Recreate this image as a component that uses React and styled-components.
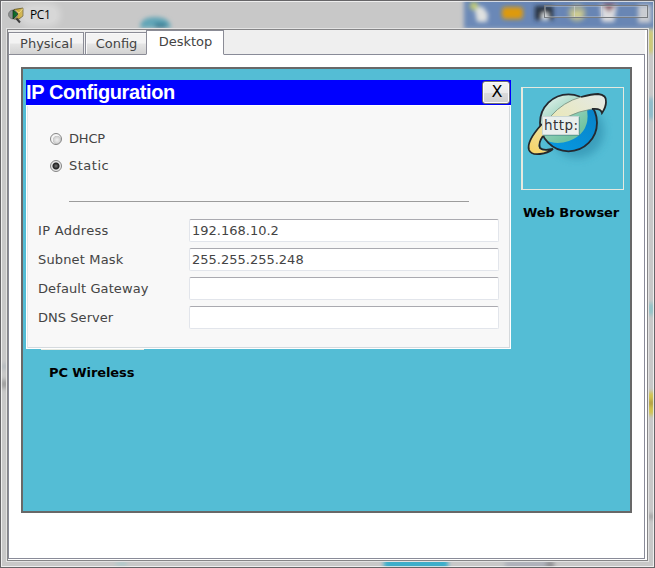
import React, { useState } from "react";
import styled, { createGlobalStyle } from "styled-components";

const GlobalStyle = createGlobalStyle`
  * { box-sizing: border-box; }
  body { margin: 0; overflow: hidden; background: #c8c8c8; }
  button, input { font: inherit; margin: 0; }
`;

const Window = styled.div`
  position: relative;
  width: 655px;
  height: 568px;
  display: flex;
  flex-direction: column;
  padding: 1px 5px 6px 6px;
  border: 1px solid #666568;
  box-shadow: inset 0 0 0 1px #eeeeee;
  background: #c8c8c8;
  font-family: Verdana, "DejaVu Sans", sans-serif;
  font-size: 13px;
  color: #444;
`;

const Backdrop = styled.svg`
  position: absolute;
  left: 0;
  top: 0;
  width: 653px;
  height: 566px;
`;

const TitleBar = styled.header`
  position: relative;
  height: 27px;
  display: flex;
  align-items: center;
  gap: 5px;
  padding: 0 0 0 1px;
`;

const Title = styled.span`
  font: 12px/16px "Segoe UI", "Open Sans", sans-serif;
  letter-spacing: -0.4px;
  color: #000;
  padding: 0 7px;
  margin-left: -7px;
  margin-top: -1px;
  border-radius: 8px;
  background: rgba(255, 255, 255, 0.28);
  box-shadow: 0 0 6px 4px rgba(255, 255, 255, 0.28);
`;

const Controls = styled.div`
  display: flex;
  width: 104px;
  height: 13px;
  margin: -8px 1px 0 auto;
  border: 1px solid #777b80;
  box-shadow: inset 0 0 0 1px rgba(220, 220, 220, 0.35);
`;

const ControlCell = styled.span`
  width: ${(p) => p.$width}px;
  border-right: ${(p) => (p.$last ? 0 : "1px solid rgba(220,220,220,.55)")};
`;

const Client = styled.main`
  position: relative;
  flex: 1;
  width: 641px;
  display: flex;
  flex-direction: column;
  border: 1px solid #858587;
  outline: 1px solid #e3e3e3;
  background: #efefef;
  padding: 0 2px 1px 0;
  box-shadow: inset -2px -1px 0 #fff;
`;

const Tabs = styled.nav`
  display: flex;
  align-items: flex-end;
  height: 25px;
  margin-bottom: -1px;
  position: relative;
`;

const Tab = styled.button`
  width: ${(p) => p.$width}px;
  height: ${(p) => (p.$active ? 25 : 23)}px;
  margin-left: ${(p) => (p.$joined ? 1 : 0)}px;
  padding: 0 0 ${(p) => (p.$active ? 1 : 0)}px;
  border: 1px solid #8b8c96;
  border-right-width: ${(p) => (p.$joined ? 0 : 1)}px;
  border-bottom-color: ${(p) => (p.$active ? "#fff" : "#8b8c96")};
  background: ${(p) =>
    p.$active ? "#fff" : "linear-gradient(#f3f3f3 0 48%, #e5e5e5 52%, #d2d2d2)"};
  box-shadow: ${(p) => (p.$active ? "none" : "inset 1px 1px 0 #fafafa")};
  color: #444;
  text-indent: 1px;
  line-height: 16px;
`;

const Page = styled.section`
  flex: 1;
  border: 1px solid #898b98;
  background: #fff;
  padding: 12px;
`;

const Desktop = styled.div`
  width: 611px;
  height: 446px;
  display: flex;
  gap: 10px;
  border: 2px solid #686868;
  background: #54bdd5;
  padding: 11px 0 0 3px;
`;

const DialogColumn = styled.div`
  width: 485px;
  display: flex;
  flex-direction: column;
`;

const DialogHeader = styled.div`
  height: 25px;
  display: flex;
  align-items: center;
  justify-content: space-between;
  padding-right: 1px;
  background: #0000ff;
`;

const DialogTitle = styled.h1`
  margin: 0;
  font: bold 20px/25px "Liberation Sans", Arial, sans-serif;
  letter-spacing: -0.4px;
  color: #fff;
`;

const CloseButton = styled.button`
  width: 28px;
  height: 23px;
  padding: 0 0 1px 2px;
  border: 1px solid #707070;
  border-radius: 3px;
  background: linear-gradient(#f3f3f3, #ebebeb 50%, #dcdcdc 51%, #cfcfcf);
  box-shadow: inset 0 0 0 1px #fbfbfb;
  color: #000;
  font-size: 16px;
  line-height: 20px;
`;

const DialogBody = styled.form`
  height: 244px;
  border: 1px solid #fff;
  background: #f8f8f8;
  box-shadow: inset 1px 0 0 #e3e7e8, inset -1px 0 0 #d5d9dc, inset 0 -1px 0 #d5dade;
  padding: 19px 11px 0;
`;

const RadioRow = styled.label`
  display: flex;
  align-items: center;
  gap: 7px;
  height: 27px;
  padding-left: 12px;
  letter-spacing: ${(p) => p.$spacing}px;
`;

const RadioDot = styled.span`
  width: 12px;
  height: 12px;
  border: 1px solid #858585;
  border-radius: 50%;
  background: ${(p) =>
    p.$checked
      ? "radial-gradient(circle at 50% 50%, #777 0, #222 2.8px, #333 3.1px, #e8e8e8 4px)"
      : "radial-gradient(circle at 60% 60%, #f1f1f1, #d4d4d4 3px, #c5c5c5 4px, #f5f5f5 4.5px)"};
`;

const HiddenRadio = styled.input`
  appearance: none;
  width: 0;
  height: 0;
  margin-right: -7px;
`;

const Divider = styled.hr`
  width: 400px;
  height: 1px;
  border: 0;
  background: #9c9c9c;
  margin: 22px 0 17px 31px;
`;

const Field = styled.label`
  display: flex;
  align-items: center;
  height: 23px;
  margin-bottom: 6px;
`;

const FieldName = styled.span`
  width: 151px;
  letter-spacing: ${(p) => p.$spacing}px;
`;

const FieldInput = styled.input`
  width: 310px;
  height: 23px;
  padding: 0 2px 0;
  border: 1px solid #e2e5eb;
  border-top-color: #aaaab0;
  border-radius: 2px;
  background: #fff;
  color: #444;
  outline: 0;
`;

const TileEdge = styled.div`
  width: 103px;
  height: 1px;
  margin-left: 15px;
  background: #e6e9df;
`;

const TileLabel = styled.div`
  color: #000;
  font-weight: bold;
  line-height: 16px;
  white-space: nowrap;
  letter-spacing: ${(p) => p.$spacing}px;
  margin: ${(p) => p.$margin};
`;

const Tile = styled.div`
  width: 103px;
  margin-top: 7px;
`;

const TilePicture = styled.div`
  height: 103px;
  border: 1px solid #e6e9df;
  border-left-width: 2px;
`;

function BlurredDesktop() {
  return (
    <Backdrop viewBox="1 1 653 566" aria-hidden="true">
      <defs>
        <filter id="soft" x="-30%" y="-60%" width="160%" height="220%">
          <feGaussianBlur stdDeviation="2" />
        </filter>
        <linearGradient id="strip" x2="1" y2="0">
          <stop offset="0" stopColor="#6c89b7" />
          <stop offset=".6" stopColor="#6685b5" />
          <stop offset="1" stopColor="#6b87b3" />
        </linearGradient>
      </defs>
      <g filter="url(#soft)">
        <path d="M464 -6H660V29H464Z" fill="url(#strip)" />
      </g>
      <g filter="url(#soft)">
        <path d="M474 6l9 1 5 7-1 8h-10z" fill="#dfe1e0" />
        <circle cx="474" cy="6" r="4" fill="#c1cc73" />
        <rect x="502" y="7" width="21" height="12" rx="4" fill="#dd9a0c" />
        <path d="M535 6h18v14h-18z" fill="#27313f" />
        <path d="M542 13h6v7h-6z" fill="#e3e7e9" />
        <circle cx="577" cy="13" r="9" fill="#a4ac9a" />
        <path d="M572 12h10v5h-10z" fill="#d8d58d" />
        <path d="M600 5h17l-3 17h-12z" fill="#dddde0" />
        <path d="M601 4h16l-8 8z" fill="#8b5560" />
        <rect x="638" y="5" width="13" height="18" fill="#c9ccd2" />
      </g>
      <g filter="url(#soft)">
        <path d="M140 28q0-11 15-11t16 11z" fill="#62a6b7" />
        <path d="M155 23h11v5h-11z" fill="#397e95" />
        <rect x="648" y="30" width="5" height="23" fill="#cfca5d" />
        <rect x="648" y="98" width="6" height="21" fill="#83b9cb" />
        <rect x="648" y="303" width="6" height="12" fill="#8bc2c8" />
        <rect x="647" y="392" width="8" height="23" fill="#d2c447" />
        <rect x="647" y="400" width="8" height="6" fill="#b19b3c" />
        <rect x="384" y="555" width="64" height="18" fill="#3daeca" />
        <rect x="505" y="560" width="48" height="10" fill="#aeb1ba" />
        <rect x="546" y="560" width="8" height="10" fill="#929295" />
        <rect x="116" y="562" width="11" height="4" fill="#aacacb" />
        <rect x="1" y="380" width="7" height="8" fill="#9b9b9b" />
        <rect x="2" y="364" width="5" height="5" fill="#aeb6bc" />
        <rect x="648" y="514" width="6" height="5" fill="#9b9b9b" />
      </g>
      <path d="M1.5 1.5H653.5V566.5H1.5Z" fill="none" stroke="#eee" strokeOpacity=".8" />
    </Backdrop>
  );
}

function PacketIcon() {
  return (
    <svg width="17" height="17" viewBox="0 0 17 17" aria-hidden="true">
      <path d="M6 2.5L15 1v8l-4 3H6z" fill="#c8a62e" stroke="#514514" strokeWidth=".8" />
      <path d="M7 3l4 3 4-4.5" fill="none" stroke="#f2dc82" strokeWidth=".8" />
      <circle cx="5" cy="7.5" r="4.4" fill="#8c9292" stroke="#777" />
      <path d="M5 3l5 4-5 5z" fill="#096c25" stroke="#142b18" strokeWidth=".7" />
      <path d="M8.5 11.5l3.5 4" stroke="#303030" strokeWidth="2" />
    </svg>
  );
}

function BrowserIcon() {
  return (
    <svg width="100" height="100" viewBox="523 88 100 100" aria-hidden="true">
      <defs>
        <linearGradient id="globe" x1=".1" y1="0" x2=".8" y2="1">
          <stop offset="0" stopColor="#eaf4ef" />
          <stop offset=".48" stopColor="#8acdb4" />
          <stop offset=".7" stopColor="#72c3a0" />
        </linearGradient>
        <linearGradient id="ocean" x1="1" y1="0" x2=".3" y2="1">
          <stop offset="0" stopColor="#087fc5" />
          <stop offset="1" stopColor="#0798df" />
        </linearGradient>
        <linearGradient id="ribbon" x1="0" y1="1" x2="1" y2="0">
          <stop offset="0" stopColor="#f7d362" />
          <stop offset=".5" stopColor="#e9e8bd" />
          <stop offset="1" stopColor="#e3e9e8" />
        </linearGradient>
        <filter id="shade" x="-40%" y="-40%" width="180%" height="180%">
          <feGaussianBlur stdDeviation="4" />
        </filter>
        <clipPath id="globeClip">
          <circle cx="568.5" cy="122.8" r="28.5" />
        </clipPath>
      </defs>
      <circle cx="577" cy="131" r="27" fill="#2f8ead" opacity=".65" filter="url(#shade)" />
      <circle cx="568.5" cy="122.8" r="28.5" fill="url(#globe)" />
      <g clipPath="url(#globeClip)">
        <path d="M586 105Q593 132 569 141Q555 146 544 139L552 154H600V105Z" fill="url(#ocean)" />
      </g>
      <circle cx="568.5" cy="122.8" r="28.5" fill="none" stroke="#242930" strokeWidth="1.8" />
      <path
        d="M550 117C562 105 571 99 581 97Q592 94 598 94Q607 95 606 102Q606 107 602 113Q601 108 592 109C582 111 574 113 567 117L543 136Q536 145 540 149Q544 152 553 149Q547 154 540 154Q530 155 528.5 150Q527 142 542 124Z"
        fill="url(#ribbon)"
      />
      <path
        d="M542 124C531 136 527 144 529 150Q531 155 540 154Q548 153 553 149Q543 151 540 148Q538 143 543 136M581 97Q592 94 598 94Q607 95 606 102Q606 107 602 113Q601 108 592 109"
        fill="none"
        stroke="#24282b"
        strokeWidth="1.8"
      />
      <path d="M551 116Q563 102 581 97M567 117Q579 111 592 109" fill="none" stroke="#7e9483" strokeWidth=".9" />
      <rect x="543" y="117" width="37" height="19" fill="#3b7781" opacity=".45" />
      <rect x="542.5" y="116.5" width="36" height="18" fill="#e9efed" stroke="#c9d7d5" />
      <text x="544" y="130" fontFamily="DejaVu Sans, sans-serif" fontSize="13.5" textLength="34" fill="#343437">
        http:
      </text>
    </svg>
  );
}

function RadioOption({ label, spacing, checked, onChange }) {
  return (
    <RadioRow $spacing={spacing}>
      <RadioDot $checked={checked} />
      <HiddenRadio type="radio" name="mode" checked={checked} onChange={onChange} />
      {label}
    </RadioRow>
  );
}

const tabs = [
  { name: "Physical", width: 76 },
  { name: "Config", width: 61 },
  { name: "Desktop", width: 78 },
];

const modes = [
  { name: "DHCP", spacing: -0.2 },
  { name: "Static", spacing: 0.5 },
];

const fields = [
  { name: "IP Address", value: "192.168.10.2", spacing: 0.3 },
  { name: "Subnet Mask", value: "255.255.255.248", spacing: 0.15 },
  { name: "Default Gateway", value: "", spacing: 0.1 },
  { name: "DNS Server", value: "", spacing: 0.05 },
];

export default function App() {
  const [mode, setMode] = useState("Static");
  return (
    <>
      <GlobalStyle />
      <Window>
        <BlurredDesktop />
        <TitleBar>
          <PacketIcon />
          <Title>PC1</Title>
          <Controls>
            <ControlCell $width={30} />
            <ControlCell $width={27} />
            <ControlCell $width={45} $last />
          </Controls>
        </TitleBar>
        <Client>
          <Tabs>
            {tabs.map((tab, i) => (
              <Tab
                key={tab.name}
                type="button"
                $width={tab.width}
                $joined={i === 1}
                $active={tab.name === "Desktop"}
              >
                {tab.name}
              </Tab>
            ))}
          </Tabs>
          <Page>
            <Desktop>
              <DialogColumn>
                <DialogHeader>
                  <DialogTitle>IP Configuration</DialogTitle>
                  <CloseButton type="button">X</CloseButton>
                </DialogHeader>
                <DialogBody>
                  {modes.map(({ name, spacing }) => (
                    <RadioOption
                      key={name}
                      label={name}
                      spacing={spacing}
                      checked={mode === name}
                      onChange={() => setMode(name)}
                    />
                  ))}
                  <Divider />
                  {fields.map((field) => (
                    <Field key={field.name}>
                      <FieldName $spacing={field.spacing}>{field.name}</FieldName>
                      <FieldInput defaultValue={field.value} />
                    </Field>
                  ))}
                </DialogBody>
                <TileEdge />
                <TileLabel $spacing={-0.1} $margin="15px 0 0 23px">
                  PC Wireless
                </TileLabel>
              </DialogColumn>
              <Tile>
                <TilePicture>
                  <BrowserIcon />
                </TilePicture>
                <TileLabel $spacing={-0.05} $margin="15px 0 0 2px">
                  Web Browser
                </TileLabel>
              </Tile>
            </Desktop>
          </Page>
        </Client>
      </Window>
    </>
  );
}
